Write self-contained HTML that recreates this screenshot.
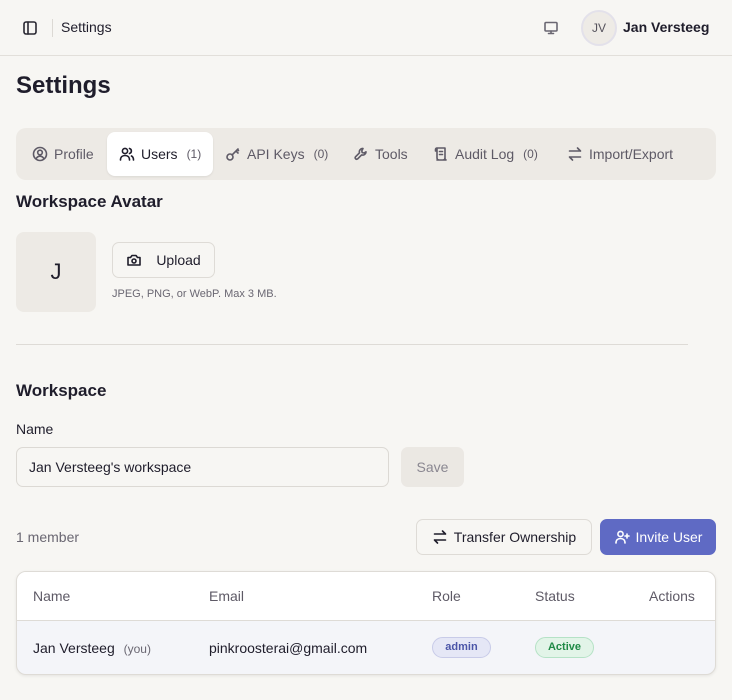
<!DOCTYPE html>
<html><head><meta charset="utf-8"><style>
*{box-sizing:border-box;margin:0;padding:0}
body{width:732px;height:700px;overflow:hidden;background:#f7f6f3;font-family:"Liberation Sans",sans-serif;color:#1f1d2b;position:relative}
.a{position:absolute}
svg{fill:none;stroke:currentColor;stroke-width:1.6;stroke-linecap:round;stroke-linejoin:round}
.tab{position:absolute;top:132px;height:44px;display:flex;align-items:center;font-size:14px;color:#5e5a66}
.tab svg{width:16px;height:16px;margin-right:6px}
.cnt{font-size:12px;margin-left:9px}
.btn{position:absolute;border:1px solid #dedbd6;border-radius:7px;display:flex;align-items:center;justify-content:center;font-size:14px}
</style></head><body>
<div class="a" style="left:0;top:0;width:732px;height:56px;border-bottom:1px solid #e2dfda"></div>
<svg class="a" style="left:22px;top:20px;width:16px;height:16px;color:#2a2833" viewBox="0 0 16 16"><rect x="2" y="2" width="12" height="12" rx="2"/><path d="M6 2v12"/></svg>
<div class="a" style="left:52px;top:19px;width:1px;height:18px;background:#dcd9d4"></div>
<div class="a" style="left:61px;top:19px;font-size:14px">Settings</div>
<svg class="a" style="left:543px;top:20px;width:16px;height:16px;color:#6a6772" viewBox="0 0 16 16"><rect x="2" y="2.5" width="12" height="8.5" rx="1"/><path d="M8 11v2.5M5.5 13.5h5"/></svg>
<div class="a" style="left:581px;top:10px;width:36px;height:36px;border-radius:50%;background:#eeebe6;border:2px solid #e3e1ea;font-size:12px;color:#55525c;display:flex;align-items:center;justify-content:center">JV</div>
<div class="a" style="left:623px;top:19px;font-size:14px;font-weight:bold">Jan Versteeg</div>

<div class="a" style="left:16px;top:72px;font-size:24px;font-weight:bold">Settings</div>

<div class="a" style="left:16px;top:128px;width:700px;height:52px;background:#edeae5;border-radius:10px"></div>
<div class="a" style="left:107px;top:132px;width:106px;height:44px;background:#fff;border-radius:8px;box-shadow:0 1px 2px rgba(0,0,0,.08)"></div>
<div class="tab" style="left:32px"><svg viewBox="0 0 16 16"><circle cx="8" cy="8" r="6.5"/><circle cx="8" cy="6.5" r="2.3"/><path d="M4.2 12.5c1-1.6 2.3-2.3 3.8-2.3s2.8.7 3.8 2.3"/></svg>Profile</div>
<div class="tab" style="left:119px;color:#1f1d2b"><svg viewBox="0 0 16 16"><circle cx="6" cy="5" r="2.6"/><path d="M1.5 14c0-3 2-4.5 4.5-4.5s4.5 1.5 4.5 4.5M10.5 2.5a2.6 2.6 0 010 5M12.5 10c1.3.7 2 2 2 4"/></svg>Users<span class="cnt" style="color:#5e5a66">(1)</span></div>
<div class="tab" style="left:225px"><svg viewBox="0 0 16 16"><circle cx="5" cy="11" r="3"/><path d="M7.2 8.8L13 3M11 5l2 2M12.5 3.5l1 1"/></svg>API Keys<span class="cnt">(0)</span></div>
<div class="tab" style="left:353px"><svg viewBox="0 0 16 16"><path d="M10 2.5a3.3 3.3 0 00-3.5 4.3L2.5 10.8a1.5 1.5 0 002.1 2.1l4-4A3.3 3.3 0 0013 5.8l-2 1.2-1.8-.4-.4-1.8z"/></svg>Tools</div>
<div class="tab" style="left:433px"><svg viewBox="0 0 16 16"><path d="M4 2h8v10a2 2 0 01-2 2H4M4 2a1.5 1.5 0 00-1.5 1.5V5H4M4 2v10a2 2 0 002 2M6.5 5.5h3M6.5 8.5h3M6 14h7a2 2 0 01-1-2"/></svg>Audit Log<span class="cnt">(0)</span></div>
<div class="tab" style="left:567px"><svg viewBox="0 0 16 16"><path d="M2.5 5h11M10.5 2l3 3M13.5 11h-11M5.5 14l-3-3"/></svg>Import/Export</div>

<div class="a" style="left:16px;top:192px;font-size:17px;font-weight:bold">Workspace Avatar</div>
<div class="a" style="left:16px;top:232px;width:80px;height:80px;background:#edeae5;border-radius:8px;font-size:22px;display:flex;align-items:center;justify-content:center">J</div>
<div class="btn" style="left:112px;top:242px;width:103px;height:36px;background:#f7f6f3"><svg style="width:16px;height:16px;margin-right:14px" viewBox="0 0 16 16"><path d="M2 5.5h2.5L6 3.5h4l1.5 2H14v7.5H2z"/><circle cx="8" cy="9" r="2"/></svg>Upload</div>
<div class="a" style="left:112px;top:288px;font-size:11px;color:#6a6772">JPEG, PNG, or WebP. Max 3 MB.</div>
<div class="a" style="left:16px;top:344px;width:672px;height:1px;background:#dedbd6"></div>

<div class="a" style="left:16px;top:381px;font-size:17px;font-weight:bold">Workspace</div>
<div class="a" style="left:16px;top:421px;font-size:14px">Name</div>
<div class="a" style="left:16px;top:447px;width:373px;height:40px;border:1px solid #dcd9d4;border-radius:7px;font-size:14px;padding:11px 12px">Jan Versteeg's workspace</div>
<div class="a" style="left:401px;top:447px;width:63px;height:40px;background:#ebe8e3;border-radius:7px;font-size:14px;color:#8a8791;display:flex;align-items:center;justify-content:center">Save</div>

<div class="a" style="left:16px;top:529px;font-size:14px;color:#6a6772">1 member</div>
<div class="btn" style="left:416px;top:519px;width:176px;height:36px"><svg style="width:16px;height:16px;margin-right:6px" viewBox="0 0 16 16"><path d="M2.5 5h11M10.5 2l3 3M13.5 11h-11M5.5 14l-3-3"/></svg>Transfer Ownership</div>
<div class="btn" style="left:600px;top:519px;width:116px;height:36px;background:#5f6ac4;border-color:#5f6ac4;color:#fff"><svg style="width:16px;height:16px;margin-right:6px" viewBox="0 0 16 16"><circle cx="6.5" cy="5" r="2.6"/><path d="M2 14c0-3 2-4.5 4.5-4.5S11 11 11 14M13 5v4M11 7h4"/></svg>Invite User</div>

<div class="a" style="left:16px;top:571px;width:700px;height:104px;background:#f4f5f9;border:1px solid #dedbd6;border-radius:10px;overflow:hidden;box-shadow:0 1px 3px rgba(0,0,0,.08)">
<div style="height:49px;background:#fff;border-bottom:1px solid #dedbd6;position:relative;font-size:14px;color:#5e5a66">
<span class="a" style="left:16px;top:16px">Name</span><span class="a" style="left:192px;top:16px">Email</span><span class="a" style="left:415px;top:16px">Role</span><span class="a" style="left:518px;top:16px">Status</span><span class="a" style="left:632px;top:16px">Actions</span></div>
<div style="position:relative;font-size:14px">
<span class="a" style="left:16px;top:19px">Jan Versteeg <span style="font-size:12px;color:#6a6772;margin-left:5px">(you)</span></span>
<span class="a" style="left:192px;top:19px">pinkroosterai@gmail.com</span>
<span class="a" style="left:415px;top:16px;width:59px;height:21px;border:1px solid #c8cbe8;background:#e5e7f6;border-radius:11px;font-size:11px;font-weight:bold;color:#4b55a8;text-align:center;line-height:19px">admin</span>
<span class="a" style="left:518px;top:16px;width:59px;height:21px;border:1px solid #b5e2c6;background:#e2f4e8;border-radius:11px;font-size:11px;font-weight:bold;color:#1f8a46;text-align:center;line-height:19px">Active</span>
</div></div>
</body></html>
